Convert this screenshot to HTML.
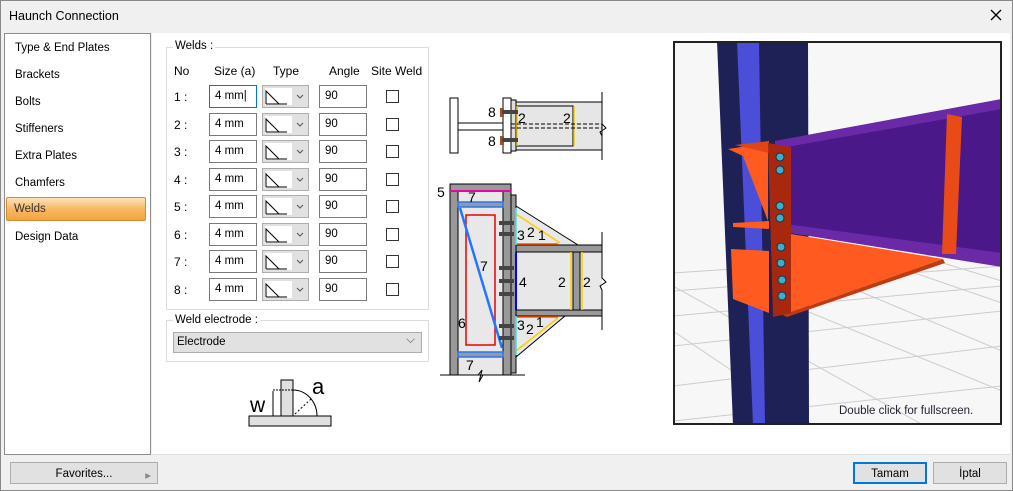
<!DOCTYPE html>
<html><head><meta charset="utf-8"><style>
*{box-sizing:border-box}
body{margin:0;width:1013px;height:491px;background:#f0f0f0;font-family:"Liberation Sans",sans-serif;font-size:12px;color:#000;position:relative;overflow:hidden}
.a{position:absolute}
.win{left:0;top:0;width:1013px;height:491px;border:1px solid #888}
.list{top:33px;left:4px;width:147px;height:422px;background:#fff;border:1px solid #8c8c8c}
.li{position:absolute;left:10px;font-size:11.5px}
.sel{left:6px;top:197px;width:140px;height:24px;background:linear-gradient(#fde2b8,#f7b865 50%,#f5a53c);border:1px solid #d38b35;border-radius:2px}
.main{left:152px;top:33px;width:858px;height:422px;background:#fff;border-bottom:1px solid #ddd}
.grp{border:1px solid #dcdcdc}
.gl{background:#fff;padding:0 2px;font-size:11.5px}
.inp{position:absolute;height:23px;border:1px solid #7a7a7a;background:#fff;font-size:11.5px;padding:4px 0 0 5px}
.cmb{position:absolute;width:47px;height:23px;border:1px solid #adadad;background:#e1e1e1}
.cb{position:absolute;width:13px;height:13px;border:1px solid #333;background:#fff}
.btn{position:absolute;border:1px solid #adadad;background:#e1e1e1;font-size:11.5px;text-align:center;padding-top:5px}
</style></head><body>
<div class="a win"></div>
<div class="a" style="left:9px;top:9px;font-size:12.5px">Haunch Connection</div>
<svg class="a" style="left:990px;top:9px" width="12" height="12"><path d="M1 1 L11 11 M11 1 L1 11" stroke="#000" stroke-width="1.3"/></svg>
<div class="a list">
<div class="li" style="top:8px">Type &amp; End Plates</div>
<div class="li" style="top:35px">Brackets</div>
<div class="li" style="top:62px">Bolts</div>
<div class="li" style="top:89px">Stiffeners</div>
<div class="li" style="top:116px">Extra Plates</div>
<div class="li" style="top:143px">Chamfers</div>
<div class="li" style="top:197px">Design Data</div>
</div>
<div class="a sel" style="top:197px"></div>
<div class="a" style="left:14px;top:203px;font-size:11.5px;color:#333">Welds</div>
<div class="a main"></div>
<div class="a grp" style="left:166px;top:47px;width:263px;height:263px"></div>
<div class="a gl" style="left:173px;top:40px">Welds :</div>
<div class="a" style="left:174px;top:64px">No</div>
<div class="a" style="left:214px;top:64px">Size (a)</div>
<div class="a" style="left:273px;top:64px">Type</div>
<div class="a" style="left:329px;top:64px">Angle</div>
<div class="a" style="left:371px;top:64px">Site Weld</div>
<div id="rows"></div>
<div class="a grp" style="left:166px;top:320px;width:263px;height:42px"></div>
<div class="a gl" style="left:173px;top:314px">Weld electrode :</div>
<div class="a" style="left:173px;top:332px;width:249px;height:21px;background:#e1e1e1;border:1px solid #adadad;padding:3px 0 0 3px;font-size:11.5px">Electrode<span style="position:absolute;right:6px;top:1px;color:#555">⌵</span></div>
<svg class="a" style="left:245px;top:375px" width="90" height="55">
<rect x="36" y="5" width="12" height="36" fill="#e0e0e0" stroke="#000"/>
<rect x="4" y="41" width="82" height="10" fill="#e0e0e0" stroke="#000"/>
<path d="M48 15 A24 26 0 0 1 72 41" fill="none" stroke="#000"/>
<line x1="28" y1="16" x2="28" y2="41" stroke="#000"/><line x1="28" y1="15" x2="48" y2="15" stroke="#000" stroke-dasharray="2 1"/>
<line x1="50" y1="39" x2="66" y2="24" stroke="#000" stroke-dasharray="2 2"/>
<text x="5" y="37" font-size="21" font-family="Liberation Sans">w</text>
<text x="67" y="19" font-size="22" font-family="Liberation Sans">a</text>
</svg>
<svg class="a" style="left:430px;top:80px" width="190" height="310" font-family="Liberation Sans" font-size="14">
<!-- top view -->
<rect x="20" y="18" width="8" height="55" fill="#fff" stroke="#000"/>
<rect x="28" y="43" width="45" height="7" fill="#fff" stroke="#000"/>
<rect x="73" y="18" width="8" height="55" fill="#fff" stroke="#000"/>
<rect x="81" y="20" width="5" height="51" fill="#ddd" stroke="#000"/>
<rect x="86" y="22" width="86" height="48" fill="#e6e6e6" stroke="#000"/>
<rect x="86" y="26" width="57" height="40" fill="none" stroke="#000"/>
<line x1="87" y1="26" x2="87" y2="66" stroke="#fc0" stroke-width="1.5"/><line x1="144" y1="26" x2="144" y2="66" stroke="#fc0" stroke-width="1.5"/>
<rect x="70" y="28" width="4" height="9" fill="#a0502a"/><rect x="70" y="56" width="4" height="9" fill="#a0502a"/>
<rect x="72" y="30" width="16" height="4" fill="#444"/><rect x="72" y="58" width="16" height="4" fill="#444"/>
<line x1="81" y1="44" x2="172" y2="44" stroke="#000" stroke-dasharray="4 2"/><line x1="81" y1="48" x2="172" y2="48" stroke="#000" stroke-dasharray="4 2"/>
<text x="58" y="37">8</text><text x="58" y="66">8</text><text x="88" y="43">2</text><text x="133" y="43">2</text>
<path d="M172 12 L172 44 L176 48 L170 52 L172 56 L172 80" fill="none" stroke="#000"/>
<!-- elevation -->
<rect x="20" y="104" width="61" height="191" fill="#e8e8e8" stroke="#000"/>
<rect x="20" y="104" width="8" height="191" fill="#999" stroke="#000"/>
<rect x="73" y="104" width="8" height="191" fill="#999" stroke="#000"/>
<rect x="20" y="104" width="61" height="7" fill="#999" stroke="#000"/>
<line x1="20" y1="111" x2="81" y2="111" stroke="#e0a" stroke-width="2"/>
<rect x="28" y="122" width="45" height="5" fill="#999" stroke="#27f" stroke-width="1.5"/>
<rect x="28" y="272" width="45" height="5" fill="#999" stroke="#27f" stroke-width="1.5"/>
<rect x="36" y="135" width="29" height="130" fill="none" stroke="#e00" stroke-width="1.5"/>
<line x1="30" y1="128" x2="72" y2="268" stroke="#27f" stroke-width="2.5"/>
<rect x="81" y="115" width="5" height="178" fill="#999" stroke="#000"/>
<path d="M86 126 L148 165 L86 165Z" fill="#e8e8e8" stroke="#000"/>
<path d="M86 277 L135 236 L86 236Z" fill="#e8e8e8" stroke="#000"/>
<rect x="86" y="172" width="86" height="58" fill="#e8e8e8"/>
<rect x="86" y="165" width="86" height="7" fill="#999" stroke="#000"/>
<rect x="86" y="230" width="86" height="6" fill="#999" stroke="#000"/>
<rect x="143" y="172" width="7" height="58" fill="#999" stroke="#000"/>
<line x1="141" y1="172" x2="141" y2="230" stroke="#fc0" stroke-width="1.5"/><line x1="152" y1="172" x2="152" y2="230" stroke="#fc0" stroke-width="1.5"/>
<line x1="86" y1="134" x2="130" y2="163" stroke="#fc0" stroke-width="1.5"/><line x1="87" y1="164" x2="128" y2="164" stroke="#f50" stroke-width="1.5"/>
<line x1="86" y1="271" x2="128" y2="238" stroke="#fc0" stroke-width="1.5"/><line x1="87" y1="237" x2="128" y2="237" stroke="#f50" stroke-width="1.5"/>
<line x1="86" y1="172" x2="86" y2="230" stroke="#00f" stroke-width="2"/>
<line x1="86" y1="128" x2="86" y2="165" stroke="#4dd" stroke-width="1.5"/><line x1="86" y1="236" x2="86" y2="275" stroke="#4dd" stroke-width="1.5"/>
<g fill="#444"><rect x="69" y="141" width="15" height="4"/><rect x="69" y="152" width="15" height="4"/><rect x="69" y="186" width="15" height="4"/><rect x="69" y="199" width="15" height="4"/><rect x="69" y="212" width="15" height="4"/><rect x="69" y="244" width="15" height="4"/><rect x="69" y="256" width="15" height="4"/></g>
<path d="M172 152 L172 198 L176 202 L170 206 L172 210 L172 250" fill="none" stroke="#000"/>
<path d="M10 295 L48 295 L52 290 L49 302 L53 295 L95 295" fill="none" stroke="#000"/>
<text x="7" y="117">5</text><text x="38" y="122">7</text><text x="50" y="191">7</text><text x="28" y="248">6</text><text x="36" y="290">7</text>
<text x="87" y="160">3</text><text x="97" y="157">2</text><text x="108" y="160">1</text>
<text x="89" y="207">4</text><text x="128" y="207">2</text><text x="153" y="207">2</text>
<text x="87" y="250">3</text><text x="96" y="254">2</text><text x="106" y="247">1</text>
</svg>
<svg class="a" style="left:673px;top:41px" width="329" height="384">
<rect width="329" height="384" fill="#f7f7f7"/>
<g stroke="#ccc" fill="none"><path d="M0 232 L329 210 M0 250 L329 225 M0 275 L329 245 M0 305 L329 270 M0 345 L329 305 M0 380 L329 345 M0 290 L140 384 M0 245 L250 384 M60 240 L329 350 M150 235 L329 310 M230 228 L329 262 M270 222 L329 240"/></g>
<polygon points="44,0 135,0 136,384 60,384" fill="#1e2155"/>
<polygon points="64,0 86,0 92,384 80,384" fill="#4a4ed8"/>
<polygon points="102,100 329,58 329,222 105,188" fill="#4a1888"/>
<polygon points="102,100 329,58 329,68 102,108" fill="#6a2aa8"/>
<polygon points="105,182 329,212 329,226 105,190" fill="#6a2aa8"/>
<polygon points="118,193 270,218 110,274" fill="#ff5a20"/>
<polygon points="110,274 270,218 272,222 114,276" fill="#c03a10"/>
<polygon points="55,108 95,102 95,180 70,115" fill="#ff5a20"/>
<polygon points="62,104 96,100 96,112" fill="#e04515"/>
<polygon points="58,208 96,210 96,272 60,258" fill="#ff5a20"/>
<polygon points="60,182 96,180 96,188 60,186" fill="#ff5a20"/>
<polygon points="95,102 118,106 118,272 100,276" fill="#a8280e"/>
<polygon points="274,73 289,76 283,213 269,213" fill="#e84a18"/>
<g fill="#3ab0c8" stroke="#135"><circle cx="107" cy="116" r="4"/><circle cx="107" cy="129" r="4"/><circle cx="107" cy="165" r="4"/><circle cx="107" cy="177" r="4"/><circle cx="108" cy="206" r="4"/><circle cx="108" cy="222" r="4"/><circle cx="109" cy="239" r="4"/><circle cx="109" cy="255" r="4"/></g>
<rect x="1" y="1" width="327" height="382" fill="none" stroke="#222" stroke-width="2"/>
<text x="166" y="373" font-size="11.5" font-family="Liberation Sans" fill="#223">Double click for fullscreen.</text>
</svg>
<div class="btn" style="left:10px;top:462px;width:148px;height:22px">Favorites...<span style="position:absolute;right:6px;color:#888">▸</span></div>
<div class="btn" style="left:853px;top:462px;width:74px;height:22px;border:2px solid #0078d7;padding-top:4px">Tamam</div>
<div class="btn" style="left:933px;top:462px;width:74px;height:22px">İptal</div>
<script>
var ys=[85,113,140,168,195,223,250,278],h='';
ys.forEach(function(y,i){
h+='<div class="a" style="left:174px;top:'+(y+5)+'px">'+(i+1)+' :</div>'+
'<div class="inp" style="left:209px;top:'+y+'px;width:48px;'+(i==0?'border-color:#0078d7':'')+'">4 mm'+(i==0?'|':'')+'</div>'+
'<div class="cmb" style="left:262px;top:'+y+'px"><svg width="45" height="21"><rect x="2" y="2" width="27" height="17" fill="#fff"/><path d="M3 18 L3 5 L16 18 L24 18 M3 18 L16 18" stroke="#000" fill="none"/><path d="M34 9 L37 12 L40 9" stroke="#555" fill="none"/></svg></div>'+
'<div class="inp" style="left:319px;top:'+y+'px;width:48px">90</div>'+
'<div class="cb" style="left:386px;top:'+(y+5)+'px"></div>';});
document.getElementById('rows').innerHTML=h;
</script>
</body></html>
